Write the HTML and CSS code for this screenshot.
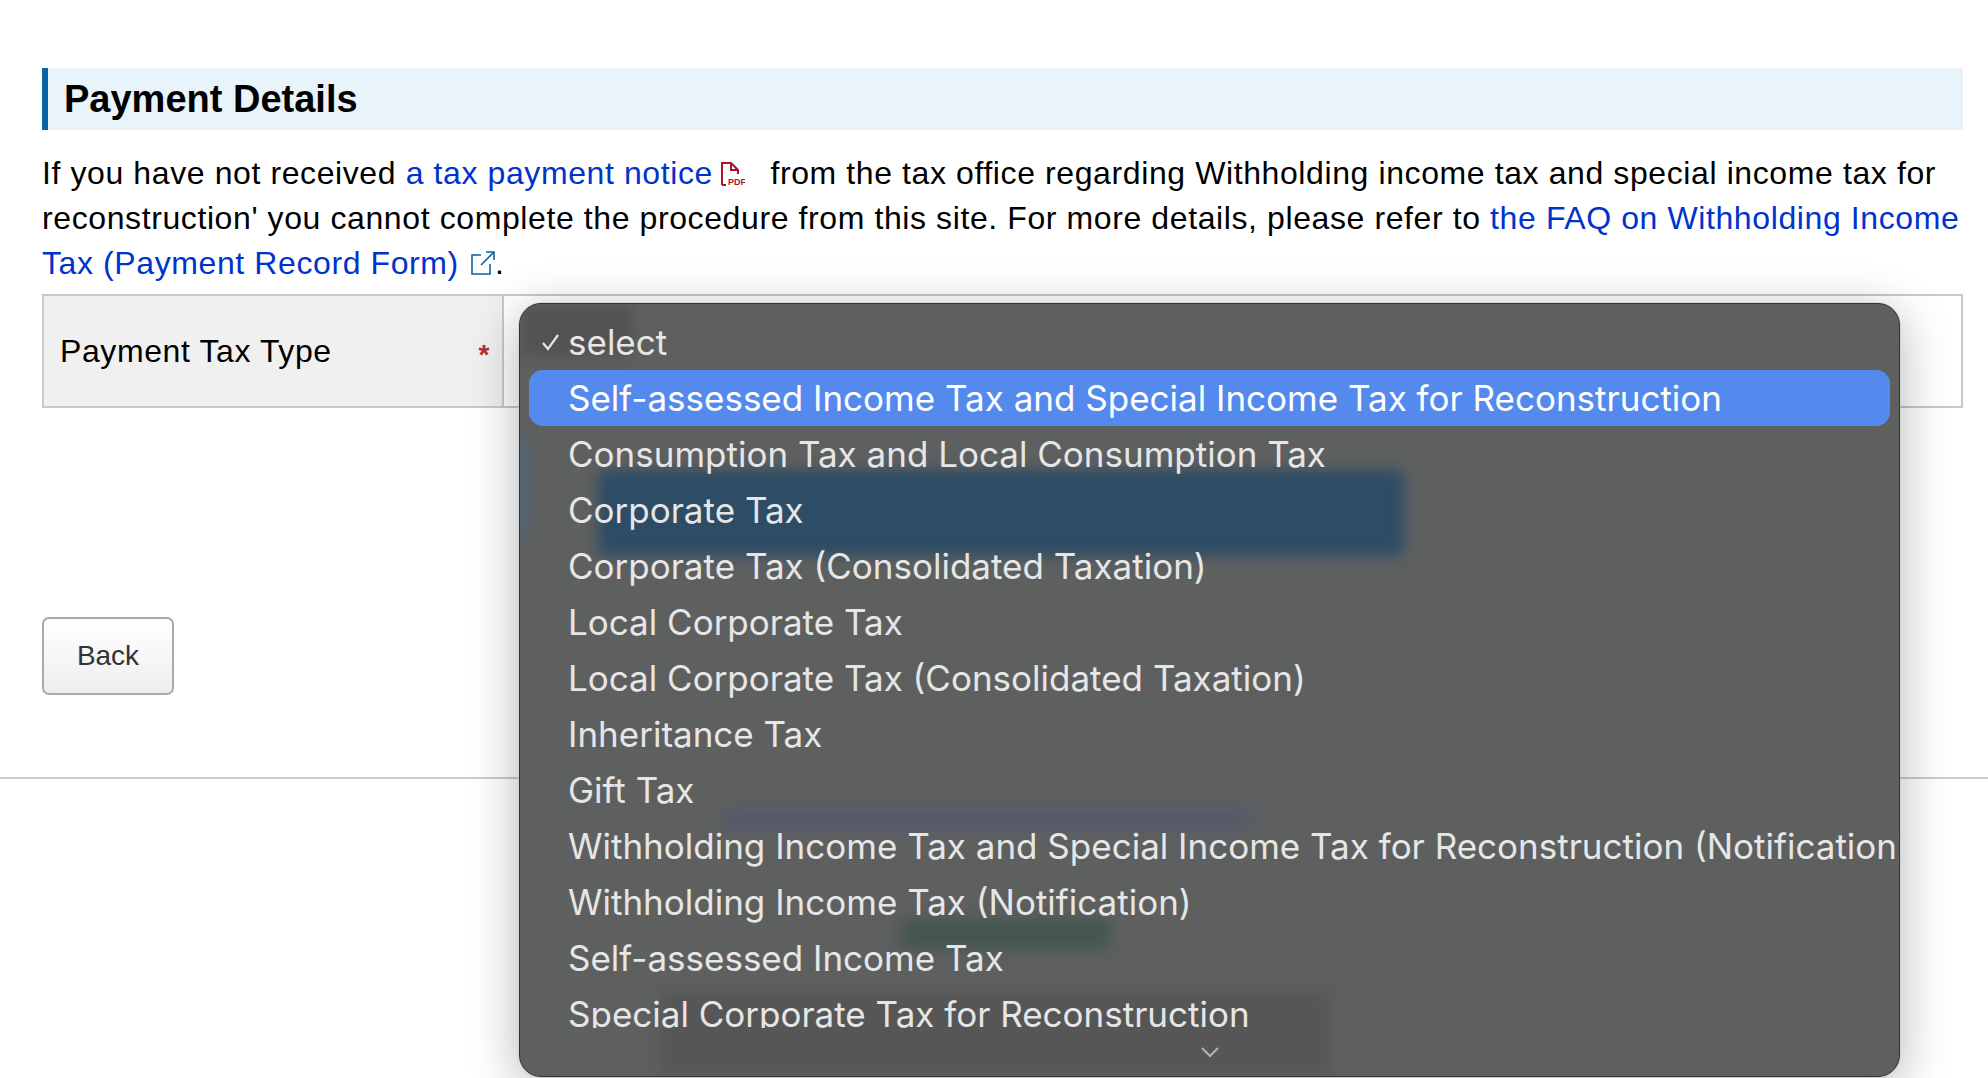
FILE: index.html
```html
<!DOCTYPE html>
<html lang="en">
<head>
<meta charset="utf-8">
<title>Payment Details</title>
<link rel="stylesheet" href="styles.css">
</head>
<body>
<main class="content">
  <h2 class="section-title">Payment Details</h2>
  <p class="intro">If you have not received <a href="#">a tax payment notice</a><svg class="icon-pdf" width="24" height="24" viewBox="0 0 24 24"><path d="M1 23V1H10L17 8V12M1 23H5M10 1V8H17" fill="none" stroke="#b0122a" stroke-width="2"/><text x="7" y="23" class="pdf-text">PDF</text></svg> from the tax office regarding Withholding income tax and special income tax for reconstruction' you cannot complete the procedure from this site. For more details, please refer to <a href="#">the FAQ on Withholding Income Tax (Payment Record Form)</a><svg class="icon-ext" width="24" height="24" viewBox="0 0 24 24"><path d="M10 4H1V23H19V13M10 14L23 1M15 1H23V9" fill="none" stroke="#0a64a4" stroke-width="1.6"/></svg>.</p>
  <div class="form-row">
    <div class="form-label"><span>Payment Tax Type</span><span class="required">*</span></div>
    <div class="form-field"></div>
  </div>
  <button class="back-button" type="button">Back</button>
</main>
<hr class="rule">
<div class="popup">
  <div class="blur blur-select"></div>
  <div class="blur blur-edge"></div>
  <div class="blur blur-primary"></div>
  <div class="blur blur-links"></div>
  <div class="blur blur-green"></div>
  <div class="blur blur-text"></div>
  <ul class="options">
    <li class="option"><svg class="check" width="20" height="20" viewBox="0 0 20 20"><path d="M2 11L7 17L17 3" fill="none" stroke="#e6e6e6" stroke-width="2.2"/></svg>select</li>
    <li class="option is-active">Self-assessed Income Tax and Special Income Tax for Reconstruction</li>
    <li class="option">Consumption Tax and Local Consumption Tax</li>
    <li class="option">Corporate Tax</li>
    <li class="option">Corporate Tax (Consolidated Taxation)</li>
    <li class="option">Local Corporate Tax</li>
    <li class="option">Local Corporate Tax (Consolidated Taxation)</li>
    <li class="option">Inheritance Tax</li>
    <li class="option">Gift Tax</li>
    <li class="option">Withholding Income Tax and Special Income Tax for Reconstruction (Notification)</li>
    <li class="option">Withholding Income Tax (Notification)</li>
    <li class="option">Self-assessed Income Tax</li>
    <li class="option">Special Corporate Tax for Reconstruction</li>
  </ul>
  <svg class="chevron" width="20" height="12" viewBox="0 0 20 12"><path d="M2 2L10 10L18 2" fill="none" stroke="#b4b4b4" stroke-width="2"/></svg>
</div>
</body>
</html>
```
FILE: styles.css
```css
* { box-sizing: border-box; }
html, body { margin: 0; height: 100%; overflow: hidden; background: #fff; }
body { position: relative; font-family: "Liberation Sans", Arial, sans-serif; color: #000; }
.content { padding: 68px 25px 0 42px; }
.section-title {
  margin: 0;
  height: 62px;
  padding-left: 16px;
  border-left: 6px solid #0a64a4;
  background: #e8f3fa;
  font-size: 38px;
  font-weight: 700;
  line-height: 62px;
}
.intro {
  margin: 0;
  padding-top: 21px;
  font-size: 32px;
  line-height: 45px;
  letter-spacing: 0.6px;
}
.intro a { color: #0033cc; text-decoration: none; }
.icon-pdf { vertical-align: -2px; margin: 0 16px 0 8px; }
.pdf-text { font-family: "Liberation Sans", sans-serif; font-size: 9px; font-weight: 700; fill: #b0122a; letter-spacing: 0; }
.icon-ext { vertical-align: -1px; margin-left: 12px; }
.form-row {
  display: flex;
  height: 114px;
  margin-top: 8px;
  border: 2px solid #c8c8c8;
}
.form-label {
  display: flex;
  align-items: center;
  justify-content: space-between;
  width: 460px;
  padding: 0 12px 0 16px;
  border-right: 2px solid #c8c8c8;
  background: #f0f0f0;
  font-size: 32px;
  letter-spacing: 0.6px;
}
.required { color: #b03030; font-size: 28px; font-weight: 700; padding-top: 8px; }
.form-field { flex: 1; }
.back-button {
  display: block;
  width: 132px;
  height: 78px;
  margin-top: 209px;
  border: 2px solid #aaa;
  border-radius: 7px;
  background: linear-gradient(#fff, #eee);
  color: #333;
  font-family: inherit;
  font-size: 28px;
}
.rule {
  margin: 82px 0 0;
  height: 2px;
  border: 0;
  background: #ccc;
}
.popup {
  position: absolute;
  left: 519px;
  top: 303px;
  width: 1381px;
  height: 774px;
  overflow: hidden;
  border: 1px solid #333;
  border-radius: 22px;
  background: #5e6060;
  box-shadow: 0 0 0 1px rgba(200,200,200,.5), 0 10px 50px rgba(0,0,0,.3);
}
.blur { position: absolute; filter: blur(7px); }
.blur-select { left: 2px; top: 2px; width: 110px; height: 50px; background: #525252; }
.blur-edge { left: -4px; top: 130px; width: 6px; height: 100px; background: #3a6ea0; }
.blur-primary { left: 78px; top: 166px; width: 806px; height: 86px; background: #2d4c65; border-radius: 6px; }
.blur-links { left: 204px; top: 504px; width: 526px; height: 22px; background: #555a6a; }
.blur-green { left: 380px; top: 614px; width: 210px; height: 32px; background: #45564f; }
.blur-text { left: 140px; top: 688px; width: 670px; height: 84px; background: #565656; }
.options {
  position: relative;
  height: 724px;
  margin: 0;
  padding: 10px 9px 0;
  overflow: hidden;
  list-style: none;
}
.option {
  position: relative;
  height: 56px;
  padding-left: 39px;
  border-radius: 14px;
  color: #e6e6e6;
  font-family: Inter, "Liberation Sans", sans-serif;
  font-size: 35px;
  line-height: 56px;
  white-space: nowrap;
}
.option.is-active { background: #548aee; color: #fff; }
.check { position: absolute; left: 12px; top: 18px; }
.chevron { position: absolute; left: 680px; bottom: 18px; }
```
